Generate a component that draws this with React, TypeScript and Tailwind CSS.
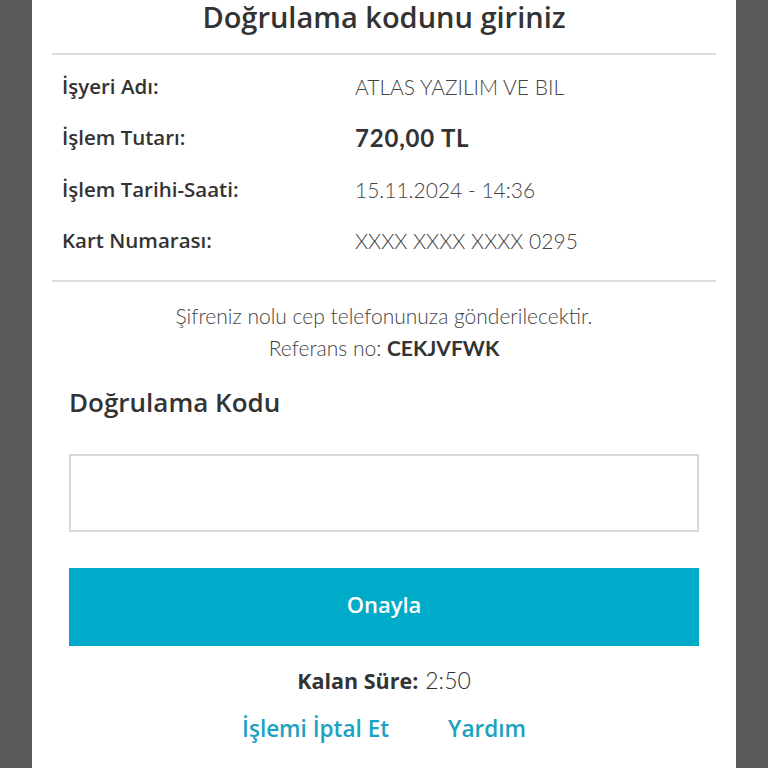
import React from "react";

const rows: { label: string; value: string; strong?: boolean }[] = [
  { label: "İşyeri Adı:", value: "ATLAS YAZILIM VE BIL" },
  { label: "İşlem Tutarı:", value: "720,00 TL", strong: true },
  { label: "İşlem Tarihi-Saati:", value: "15.11.2024 - 14:36" },
  { label: "Kart Numarası:", value: "XXXX XXXX XXXX 0295" },
];

const light = { fontFamily: "Lato, 'Open Sans', sans-serif" };

export default function App() {
  return (
    <div
      className="w-[768px] h-[768px] overflow-hidden bg-[#595959] flex justify-center"
      style={{ fontFamily: "'Open Sans', Lato, sans-serif" }}
    >
      <div className="w-[704px] h-full bg-white flex flex-col">
        <h1 className="text-center text-[29px] font-semibold text-[#333] leading-[34px] mt-0">
          Doğrulama kodunu giriniz
        </h1>
        <div className="mx-[20px] mt-[19px] border-t-2 border-[#dcdcdc]" />
        <div className="px-[30px] pt-[5.5px] pb-[13.5px] flex flex-col">
          {rows.map((r) => (
            <div key={r.label} className="flex items-center h-[51.5px]">
              <span className="w-[293px] text-[20.5px] font-semibold text-[#333]">
                {r.label}
              </span>
              <span
                style={light}
                className={
                  r.strong
                    ? "text-[24px] font-bold text-[#333] tracking-[0.8px]"
                    : "text-[21px] font-light text-[#444]"
                }
              >
                {r.value}
              </span>
            </div>
          ))}
        </div>
        <div className="mx-[20px] border-t-2 border-[#dcdcdc]" />
        <div
          style={light}
          className="flex flex-col items-center pt-[18px] text-[21px] font-light text-[#444] leading-[32px]"
        >
          <p>Şifreniz nolu cep telefonunuza gönderilecektir.</p>
          <p>
            Referans no:{" "}
            <span className="font-bold text-[21px] text-[#333]">CEKJVFWK</span>
          </p>
        </div>
        <div className="px-[37px] pt-[22px]">
          <h2 className="text-[26px] font-semibold text-[#333] leading-[32px]">
            Doğrulama Kodu
          </h2>
          <input
            type="text"
            className="mt-[36px] w-full h-[78px] border-2 border-[#d9d9d9] outline-none px-3 text-[20px]"
          />
          <button
            type="button"
            className="mt-[36px] w-full h-[78px] bg-[#00aac9] text-white text-[22px] font-semibold pb-[6px]"
          >
            Onayla
          </button>
          <div className="flex justify-center items-baseline gap-[7px] mt-[19px] leading-[30px]">
            <span className="text-[21.5px] font-bold text-[#333]">Kalan Süre:</span>
            <span style={light} className="text-[23px] font-light text-[#333]">
              2:50
            </span>
          </div>
          <div className="flex justify-center gap-[59px] mt-[18px] text-[22.5px] font-semibold text-[#1aa3c0] leading-[30px]">
            <a href="#">İşlemi İptal Et</a>
            <a href="#">Yardım</a>
          </div>
        </div>
      </div>
    </div>
  );
}
